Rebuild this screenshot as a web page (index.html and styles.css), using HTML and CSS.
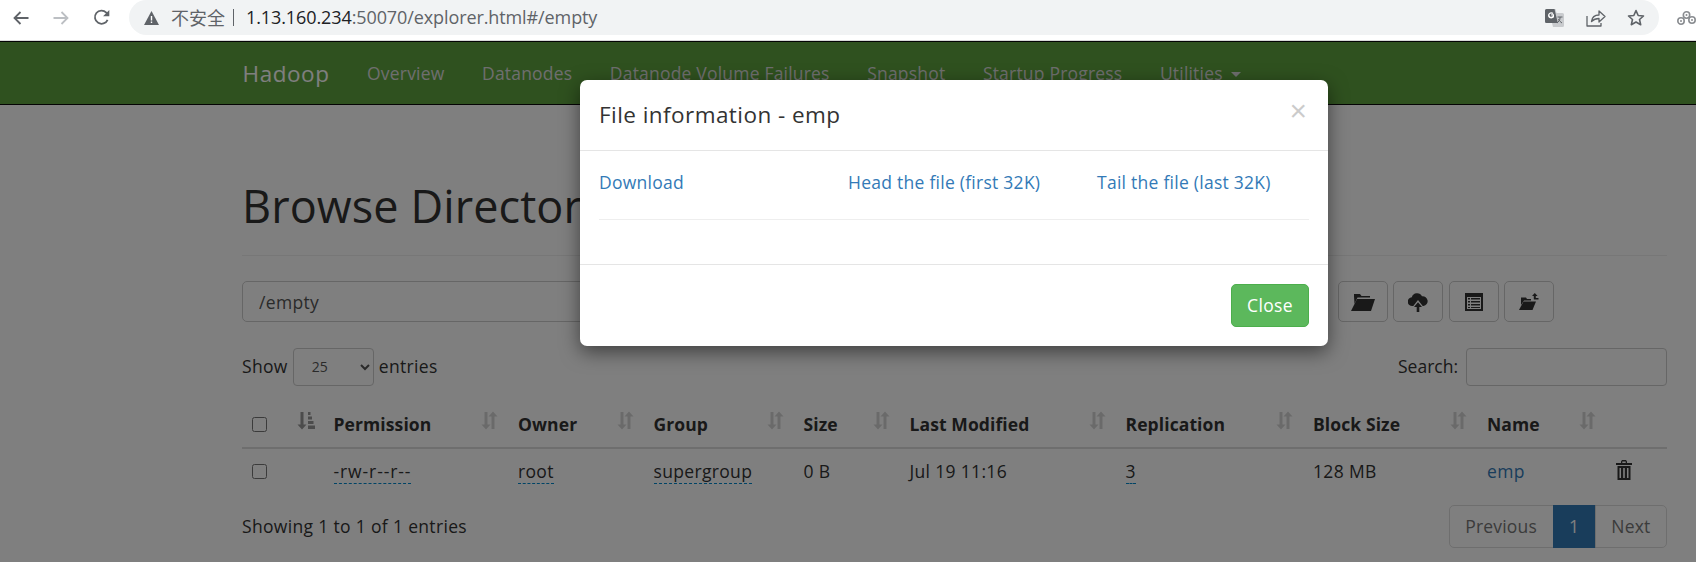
FILE: index.html
```html
<!DOCTYPE html>
<html lang="en">
<head>
<meta charset="utf-8">
<title>Browsing HDFS</title>
<link rel="stylesheet" href="styles.css">
</head>
<body>
<header class="chrome">
  <div class="chrome-nav">
    <svg class="ci" width="16" height="14" viewBox="0 0 16 14"><path class="ci-s" d="M15.5 7H1.5M7.5 1 1.5 7l6 6"/></svg>
    <svg class="ci ci-off" width="16" height="14" viewBox="0 0 16 14"><path class="ci-s" d="M.5 7h14M8.5 1l6 6-6 6"/></svg>
    <svg class="ci" width="17" height="17" viewBox="0 0 17 17"><path class="ci-s" d="M14.6 10.8A6.6 6.6 0 1 1 13.3 3.6L15.5 5.8"/><path class="ci-f" d="M16.3 1v6.2h-6.2z"/></svg>
  </div>
  <div class="omnibox">
    <svg class="warn" width="15" height="14" viewBox="0 0 15 14"><path d="M7.5 0 15 14H0z" fill="#5f6368"/><path d="M6.8 5h1.4v4.6H6.8zM6.8 10.6h1.4V12H6.8z" fill="#fff"/></svg>
    <span class="insecure">不安全</span>
    <span class="sep"></span>
    <span class="url"><b>1.13.160.234</b>:50070/explorer.html#/empty</span>
    <span class="omni-actions">
      <svg width="20" height="18" viewBox="0 0 20 18"><path d="M1.5 0h9l1 4h6A1.5 1.5 0 0 1 19 5.500V16.500A1.500 1.500 0 0 1 17.500 18H8l-1-4H1.500A1.500 1.500 0 0 1 0 12.500V1.500A1.500 1.500 0 0 1 1.500 0z" fill="#c9cbce"/><path d="M1.500 0h8l3.300 14H1.500A1.500 1.500 0 0 1 0 12.500V1.500A1.500 1.500 0 0 1 1.500 0z" fill="#5f6368"/><path d="M9 5.200H6.200v1.400H8C7.700 8 5 8.300 4.500 6.500 4.200 4.700 6.200 3.800 7.500 5L8.500 4C6.500 2.200 3 3.500 3 6.500s4.500 4 6 1.500z" fill="#fff"/><path d="M12.500 8h5M15 8v1c0 2-1.500 4-3 5M13.500 10c.5 1.500 2 3 3.500 4" fill="none" stroke="#5f6368" stroke-width="1"/></svg>
      <svg width="20" height="18" viewBox="0 0 20 18"><path class="ci-t" d="M1 7v10h14v-3M5.500 12.500C6 8.500 9 6 13 6V2l6 5.500-6 5.500V9.500c-3 0-5.500 1-7.500 3z"/></svg>
      <svg width="18" height="17" viewBox="0 0 18 17"><path d="M9 1.600 11.200 6.500l5.300.5-4 3.500 1.200 5.200L9 13l-4.700 2.700 1.200-5.200-4-3.500 5.300-.5z" fill="none" stroke="#5f6368" stroke-width="1.600" stroke-linejoin="round"/></svg>
    </span>
  </div>
  <svg class="ext" width="19" height="16" viewBox="0 0 19 16"><g fill="none" stroke="#8a8d91" stroke-width="1.600"><circle cx="4" cy="11" r="3.200"/><circle cx="9.500" cy="5" r="3.200"/><circle cx="15" cy="10" r="3.200"/></g><g fill="#8a8d91"><circle cx="4" cy="11" r="1"/><circle cx="9.500" cy="5" r="1"/><circle cx="15" cy="10" r="1"/></g></svg>
</header>

<div class="viewport">
  <div class="page">
    <nav class="navbar">
      <div class="nav-inner">
        <a class="brand" href="#">Hadoop</a>
        <ul class="nav-list">
          <li><a href="#">Overview</a></li>
          <li><a href="#">Datanodes</a></li>
          <li><a href="#">Datanode Volume Failures</a></li>
          <li><a href="#">Snapshot</a></li>
          <li><a href="#">Startup Progress</a></li>
          <li><a href="#">Utilities <span class="caret"></span></a></li>
        </ul>
      </div>
    </nav>

    <main class="container">
      <div class="page-header"><h1>Browse Directory</h1></div>

      <div class="toolbar">
        <input class="path-input" type="text" value="/empty">
        <button class="icon-btn" type="button" aria-label="Create directory"><svg width="24" height="18" viewBox="0 0 24 18"><path class="ico" d="M3 3.500V1h6l1.500 2H19v1.500H6.500L3.500 11z"/><path class="ico" d="M6 6h18l-4 12H0z"/></svg></button>
        <button class="icon-btn" type="button" aria-label="Upload"><svg width="20" height="20" viewBox="0 0 20 20"><path class="ico" d="M4.500 14A4.200 4.200 0 0 1 3.800 5.200 5.500 5.500 0 0 1 14 4.300 4.700 4.700 0 0 1 15.500 14h-.8L10 8 5.300 14z"/><path class="ico" d="M10 10.200 14 15H11.300V20H8.700V15H6z"/></svg></button>
        <button class="icon-btn" type="button" aria-label="Cut and paste"><svg width="18" height="18" viewBox="0 0 18 18"><path class="ico" fill-rule="evenodd" d="M0 0h18v18H0zM2 4v12h14V4zM3 5h2v1.500H3zM6 5h9v1.500H6zM3 8h2v1.500H3zM6 8h9v1.500H6zM3 11h2v1.500H3zM6 11h9v1.500H6zM3 14h2v1H3zM6 14h9v1H6z"/></svg></button>
        <button class="icon-btn" type="button" aria-label="Parent directory"><svg width="20" height="18" viewBox="0 0 20 18"><path class="ico" d="M2 6.500V4.500h5l1 1.500h4v1.500H5L2 12z"/><path class="ico" d="M4.500 8.500H17L13.500 17H0z"/><path class="ico" d="M14.800 6.500V3H13l2.800-3 2.800 3h-1.800v2h2.700v1.500z"/></svg></button>
      </div>

      <div class="table-controls">
        <label class="length">Show
          <select class="length-select"><option>25</option></select>
          entries</label>
        <label class="search">Search: <input class="search-input" type="search"></label>
      </div>

      <table class="files">
        <colgroup>
          <col class="c-check"><col class="c-perm"><col class="c-owner"><col class="c-group"><col class="c-size"><col class="c-mod"><col class="c-repl"><col class="c-block"><col class="c-name"><col class="c-del">
        </colgroup>
        <thead>
          <tr>
            <th class="sortable"><input class="check" type="checkbox"><svg class="sort sort-on" width="18" height="19" viewBox="0 0 18 19"><use href="#sorted"/></svg></th>
            <th class="sortable">Permission<svg class="sort" width="18" height="19" viewBox="0 0 18 19"><use href="#unsorted"/></svg></th>
            <th class="sortable">Owner<svg class="sort" width="18" height="19" viewBox="0 0 18 19"><use href="#unsorted"/></svg></th>
            <th class="sortable">Group<svg class="sort" width="18" height="19" viewBox="0 0 18 19"><use href="#unsorted"/></svg></th>
            <th class="sortable">Size<svg class="sort" width="18" height="19" viewBox="0 0 18 19"><use href="#unsorted"/></svg></th>
            <th class="sortable">Last Modified<svg class="sort" width="18" height="19" viewBox="0 0 18 19"><use href="#unsorted"/></svg></th>
            <th class="sortable">Replication<svg class="sort" width="18" height="19" viewBox="0 0 18 19"><use href="#unsorted"/></svg></th>
            <th class="sortable">Block Size<svg class="sort" width="18" height="19" viewBox="0 0 18 19"><use href="#unsorted"/></svg></th>
            <th class="sortable">Name<svg class="sort" width="18" height="19" viewBox="0 0 18 19"><use href="#unsorted"/></svg></th>
            <th></th>
          </tr>
        </thead>
        <tbody>
          <tr>
            <td><input class="check" type="checkbox"></td>
            <td><span class="editable perm">-rw-r--r--</span></td>
            <td><span class="editable">root</span></td>
            <td><span class="editable">supergroup</span></td>
            <td>0 B</td>
            <td>Jul 19 11:16</td>
            <td><span class="editable">3</span></td>
            <td>128 MB</td>
            <td><a href="#">emp</a></td>
            <td><svg class="trash" width="16" height="20" viewBox="0 0 16 20"><path class="ico" fill-rule="evenodd" d="M5 3V1.500L6 0h4l1 1.500V3h5v2H0V3zM6.300 3h3.400V1.500H6.300zM1.500 6h13v14h-13zM3.500 8v10h1.500V8zM7.200 8v10h1.600V8zM11 8v10h1.500V8z"/></svg></td>
          </tr>
        </tbody>
      </table>

      <div class="table-foot">
        <div>Showing 1 to 1 of 1 entries</div>
        <ul class="pagination">
          <li><a href="#">Previous</a></li>
          <li class="active"><a href="#">1</a></li>
          <li><a href="#">Next</a></li>
        </ul>
      </div>
    </main>

    <div class="backdrop"></div>

    <section class="modal">
      <div class="modal-header">
        <h4>File information - emp</h4>
        <button class="close" type="button">×</button>
      </div>
      <div class="modal-body">
        <div class="link-row">
          <a href="#">Download</a>
          <a href="#">Head the file (first 32K)</a>
          <a href="#">Tail the file (last 32K)</a>
        </div>
        <hr>
      </div>
      <div class="modal-footer">
        <button class="btn-close" type="button">Close</button>
      </div>
    </section>
  </div>
</div>

<svg class="defs" width="0" height="0" aria-hidden="true">
  <symbol id="unsorted" viewBox="0 0 18 19">
    <path d="M3.500 1h3v12.500H9.500L5 18.500.5 13.500h3zM12 .5 16.500 5.500h-3V18h-3V5.500h-3z"/>
  </symbol>
  <symbol id="sorted" viewBox="0 0 18 19">
    <path d="M3.500 1h3v12.500H9.500L5 18.500.5 13.500h3zM11 1h2.500v3H11zM11 5.500h4v3h-4zM11 10h5.500v3H11zM11 14.500h7V18h-7z"/>
  </symbol>
</svg>
</body>
</html>
```
FILE: styles.css
```css
* { box-sizing: border-box; }
html, body { margin: 0; height: 100%; overflow: hidden; background: #fff; }
body {
  font-family: "Open Sans", "Noto Sans CJK SC", sans-serif;
  font-size: 17.5px;
  line-height: 25px;
  color: #333;
  letter-spacing: .33px;
}
a { color: #337ab7; text-decoration: none; }
ul { list-style: none; margin: 0; padding: 0; }
.defs { position: absolute; }

/* browser chrome */
.chrome { height: 41px; display: flex; align-items: flex-start; background: #fff; border-bottom: 1px solid #d8d8d8; letter-spacing: 0; }
.chrome-nav { display: flex; align-items: center; width: 129px; height: 35px; padding-left: 13px; gap: 24px; }
.ci-s { fill: none; stroke: #5f6368; stroke-width: 1.8; }
.ci-f { fill: #5f6368; }
.ci-t { fill: none; stroke: #5f6368; stroke-width: 1.300; stroke-linejoin: round; }
.ci-off .ci-s { stroke: #bcbfc3; }
.omnibox { width: 1530px; height: 35px; background: #f1f3f4; border-radius: 18px; display: flex; align-items: center; padding-left: 15px; }
.warn { flex: none; }
.insecure { margin-left: 12px; color: #5f6368; font-size: 18px; font-family: "Noto Sans CJK SC", sans-serif; }
.sep { width: 1px; height: 17px; background: #5f6368; margin: 0 12px 0 8px; }
.url { font-family: "Open Sans", sans-serif; font-size: 18px; color: #5f6368; letter-spacing: -.1px; }
.url b { font-weight: 400; color: #202124; }
.omni-actions { margin-left: auto; margin-right: 14px; display: flex; align-items: center; gap: 21px; }
.ext { margin: 10px 0 0 18px; flex: none; }

/* page */
.viewport { height: 521px; overflow: hidden; position: relative; }
.page { width: 1909px; position: relative; }
.navbar { height: 64px; background: #5fa33e; border-bottom: 1px solid #080808; border-top: 1px solid #080808; }
.nav-inner { width: 1462px; margin: 0 auto; padding: 0 19px; display: flex; align-items: center; height: 62px; }
.brand { color: #fff; font-size: 22.500px; letter-spacing: .55px; margin-right: 18.750px; }
.nav-list { display: flex; letter-spacing: .2px; }
.nav-list a { color: #ddd; padding: 0 18.750px; }
.caret { display: inline-block; width: 0; height: 0; margin-left: 3px; vertical-align: middle; border-top: 5px solid; border-left: 5px solid transparent; border-right: 5px solid transparent; }

.container { width: 1462px; margin: 0 auto; padding: 0 18.500px; }
.page-header { margin-top: 76px; padding-bottom: 11px; border-bottom: 1px solid #eee; }
h1 { font-size: 45px; font-weight: 400; line-height: 50px; margin: 0 0 13px; letter-spacing: .1px; }

.toolbar { margin-top: 25px; display: flex; gap: 5.500px; padding-right: 113px; }
.path-input { flex: 1; height: 41px; border: 1px solid #ccc; border-radius: 5px; padding: 0 16px; font: inherit; letter-spacing: inherit; color: #555; background: #fff; margin-right: 6px; }
.icon-btn { width: 50px; height: 41px; padding: 0; display: flex; align-items: center; justify-content: center; border: 1px solid #ccc; border-radius: 5px; background: #fff; }
.ico { fill: #333; }

.table-controls { margin-top: 25px; display: flex; justify-content: space-between; align-items: center; height: 39px; }
.length { display: flex; align-items: center; gap: 5px; }
.length-select { width: 81px; height: 38px; border: 1px solid #ccc; border-radius: 4px; background: #fff; color: #555; font: 14px "Open Sans", sans-serif; padding-left: 14px; }
.search { display: flex; align-items: center; gap: 8px; letter-spacing: 0; }
.search-input { width: 201px; height: 38px; border: 1px solid #ccc; border-radius: 4px; background: #fff; }

.files { width: 100%; table-layout: fixed; border-collapse: collapse; margin-top: 15px; }
.c-check { width: 81.500px; }
.c-perm { width: 184.500px; }
.c-owner { width: 135.500px; }
.c-group { width: 150px; }
.c-size { width: 106px; }
.c-mod { width: 216px; }
.c-repl { width: 187.500px; }
.c-block { width: 174px; }
.c-name { width: 129px; }
.c-del { width: 61px; }
th { text-align: left; padding: 10px; position: relative; height: 47px; border-bottom: 2.500px solid #ddd; font-weight: 700; letter-spacing: .1px; }
td { padding: 10px; height: 45px; }
.check { width: 15px; height: 15px; margin: 0; display: block; }
.sort { position: absolute; right: 9px; top: 10px; fill: #333; opacity: .2; }
.sort-on { opacity: .5; }
.editable { border-bottom: 1px dashed #08c; display: inline-block; line-height: 23px; }
.perm { letter-spacing: .9px; }
.trash { display: block; margin-top: -4px; }

.table-foot { margin-top: 11px; display: flex; justify-content: space-between; align-items: center; }
.pagination { display: flex; letter-spacing: .2px; }
.pagination a { display: block; height: 43px; line-height: 41px; padding: 0 15.500px; border: 1px solid #ddd; color: #777; margin-left: -1px; background: #fff; }
.pagination li:first-child a { border-radius: 5px 0 0 5px; }
.pagination li:last-child a { border-radius: 0 5px 5px 0; }
.pagination .active a { background: #337ab7; border-color: #337ab7; color: #fff; min-width: 43px; text-align: center; }

/* modal */
.backdrop { position: absolute; left: 0; top: 0; width: 100%; height: 600px; background: rgba(0, 0, 0, .5); }
.modal { position: absolute; left: 580px; top: 39px; width: 748px; background: #fff; border-radius: 7px; box-shadow: 0 6px 19px rgba(0, 0, 0, .5); }
.modal-header { height: 71px; padding: 18.500px 19px; border-bottom: 1px solid #e5e5e5; position: relative; }
h4 { margin: 0; font-size: 22.500px; font-weight: 400; line-height: 32px; letter-spacing: .44px; }
.close { position: absolute; right: 21px; top: 16px; border: 0; background: none; padding: 0; font: 400 30px/1 "Liberation Sans", sans-serif; color: #000; opacity: .2; }
.modal-body { padding: 18.750px 19px; height: 113px; }
.link-row { display: grid; grid-template-columns: 249px 249px 1fr; letter-spacing: .26px; }
hr { border: 0; border-top: 1px solid #eee; margin: 24px 0 0; }
.modal-footer { border-top: 1px solid #e5e5e5; padding: 19px 19px 19px 0; display: flex; justify-content: flex-end; }
.btn-close { width: 78px; height: 43px; border: 1px solid #4cae4c; border-radius: 5px; background: #5cb85c; color: #fff; font: inherit; letter-spacing: inherit; padding: 0; }
```
